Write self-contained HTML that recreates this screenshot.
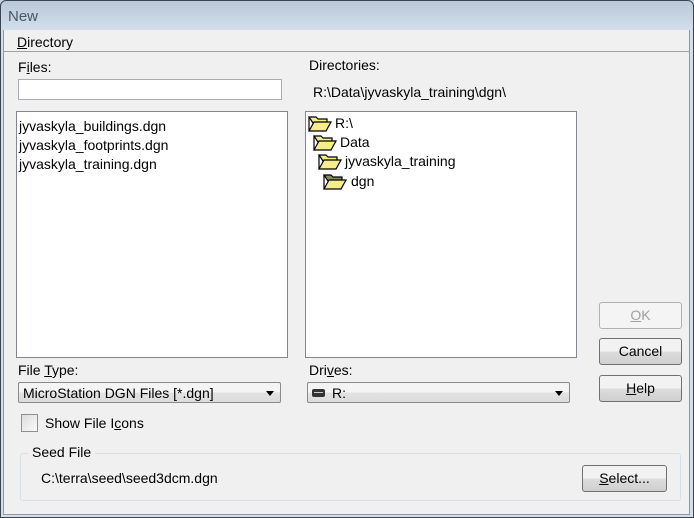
<!DOCTYPE html>
<html><head><meta charset="utf-8"><style>
*{margin:0;padding:0;box-sizing:border-box}
body{width:694px;height:518px;overflow:hidden;background:#c9d5e2;font-family:"Liberation Sans",Arial,sans-serif;font-size:14px;color:#000;position:relative}
.win{position:absolute;left:0;top:0;width:694px;height:518px;border:1px solid #3c4450;border-radius:6px 6px 0 0;background:linear-gradient(#b9c8d8,#d3dfec 30px,#d3dfec);}
.client{position:absolute;left:3px;top:30px;width:687px;height:485px;background:#f0f0f0;border-right:1px solid #8d98a6;border-bottom:1px solid #8d98a6;border-left:1px solid #8d98a6}
.a{position:absolute}
u{text-decoration:underline}
.box{position:absolute;background:#fff;border:1px solid #abadb3}
.btn{position:absolute;border:1px solid #707070;border-radius:3px;background:linear-gradient(#f2f2f2 50%,#dddddd 50%,#cfcfcf);text-align:center;line-height:25px}
.combo{position:absolute;border:1px solid #8a8a8a;border-radius:2px;background:linear-gradient(#f4f4f4 50%,#e3e3e3 50%,#dcdcdc);line-height:20px}
.arr{position:absolute;right:6px;top:8px;width:0;height:0;border-left:4px solid transparent;border-right:4px solid transparent;border-top:5px solid #000}
</style></head><body>
<div class="win"></div>
<div class="a" style="left:8px;top:8px;color:#4b5663;font-size:15px">New</div>
<div class="client"></div>
<div class="a" style="left:17px;top:34px"><u>D</u>irectory</div>
<div class="a" style="left:3px;top:51px;width:687px;height:1px;background:#a0a0a0"></div>
<div class="a" style="left:18px;top:59px">F<u>i</u>les:</div>
<div class="box" style="left:18px;top:79px;width:264px;height:21px"></div>
<div class="a" style="left:309px;top:57px">Directories:</div>
<div class="a" style="left:313px;top:84px">R:\Data\jyvaskyla_training\dgn\</div>
<div class="box" style="left:16px;top:111px;width:272px;height:247px;border-color:#828790">
<div style="padding:5px 0 0 2px;line-height:19px">jyvaskyla_buildings.dgn<br>jyvaskyla_footprints.dgn<br>jyvaskyla_training.dgn</div></div>
<div class="box" style="left:305px;top:111px;width:272px;height:247px;border-color:#828790"></div>
<svg class="a" style="left:308px;top:114px" width="70" height="80" viewBox="0 0 70 80">
<g stroke="#000" stroke-width="1.2" fill="#f5ec8a">
<path d="M1 3 h7 l2 2 h9 v4 h-14z"/><path d="M1 17 v-14 M1 17 l5-9 h17 l-5 9z"/>
<path d="M6 22 h7 l2 2 h9 v4 h-14z"/><path d="M6 36 v-14 M6 36 l5-9 h17 l-5 9z"/>
<path d="M11 41 h7 l2 2 h9 v4 h-14z"/><path d="M11 55 v-14 M11 55 l5-9 h17 l-5 9z"/>
<path d="M16 61 h7 l2 2 h9 v4 h-14z" fill="#8a8a5a"/><path d="M16 75 v-14 M16 75 l5-9 h17 l-5 9z"/>
</g></svg>
<div class="a" style="left:335px;top:115px">R:\</div>
<div class="a" style="left:340px;top:134px">Data</div>
<div class="a" style="left:345px;top:153px">jyvaskyla_training</div>
<div class="a" style="left:351px;top:173px">dgn</div>
<div class="btn" style="left:599px;top:302px;width:83px;height:27px;color:#a0a0a0;background:#f4f4f4;border-color:#adb2b5"><u>O</u>K</div>
<div class="btn" style="left:599px;top:338px;width:83px;height:27px">Cancel</div>
<div class="btn" style="left:599px;top:375px;width:83px;height:27px"><u>H</u>elp</div>
<div class="a" style="left:18px;top:362px">File <u>T</u>ype:</div>
<div class="combo" style="left:18px;top:382px;width:263px;height:21px;padding-left:4px;font-size:14px">MicroStation DGN Files [*.dgn]<div class="arr"></div></div>
<div class="a" style="left:309px;top:362px">Dri<u>v</u>es:</div>
<div class="combo" style="left:307px;top:382px;width:263px;height:21px;padding-left:24px;font-size:14px">R:<div class="arr"></div>
<div class="a" style="left:4px;top:6px;width:13px;height:8px;background:#333;border-radius:2px"><div style="margin:3px 2px;height:1px;background:#ccc"></div></div></div>
<div class="a" style="left:21px;top:414px;width:17px;height:18px;border:1px solid #8f8f8f;background:linear-gradient(135deg,#dcdcdc,#fafafa)"></div>
<div class="a" style="left:45px;top:415px">Show File I<u>c</u>ons</div>
<div class="a" style="left:20px;top:453px;width:661px;height:48px;border:1px solid #d5dfe5;border-radius:3px"></div>
<div class="a" style="left:28px;top:444px;padding:0 4px;background:#f0f0f0">Seed File</div>
<div class="a" style="left:41px;top:470px">C:\terra\seed\seed3dcm.dgn</div>
<div class="btn" style="left:582px;top:465px;width:85px;height:27px"><u>S</u>elect...</div>
</body></html>
